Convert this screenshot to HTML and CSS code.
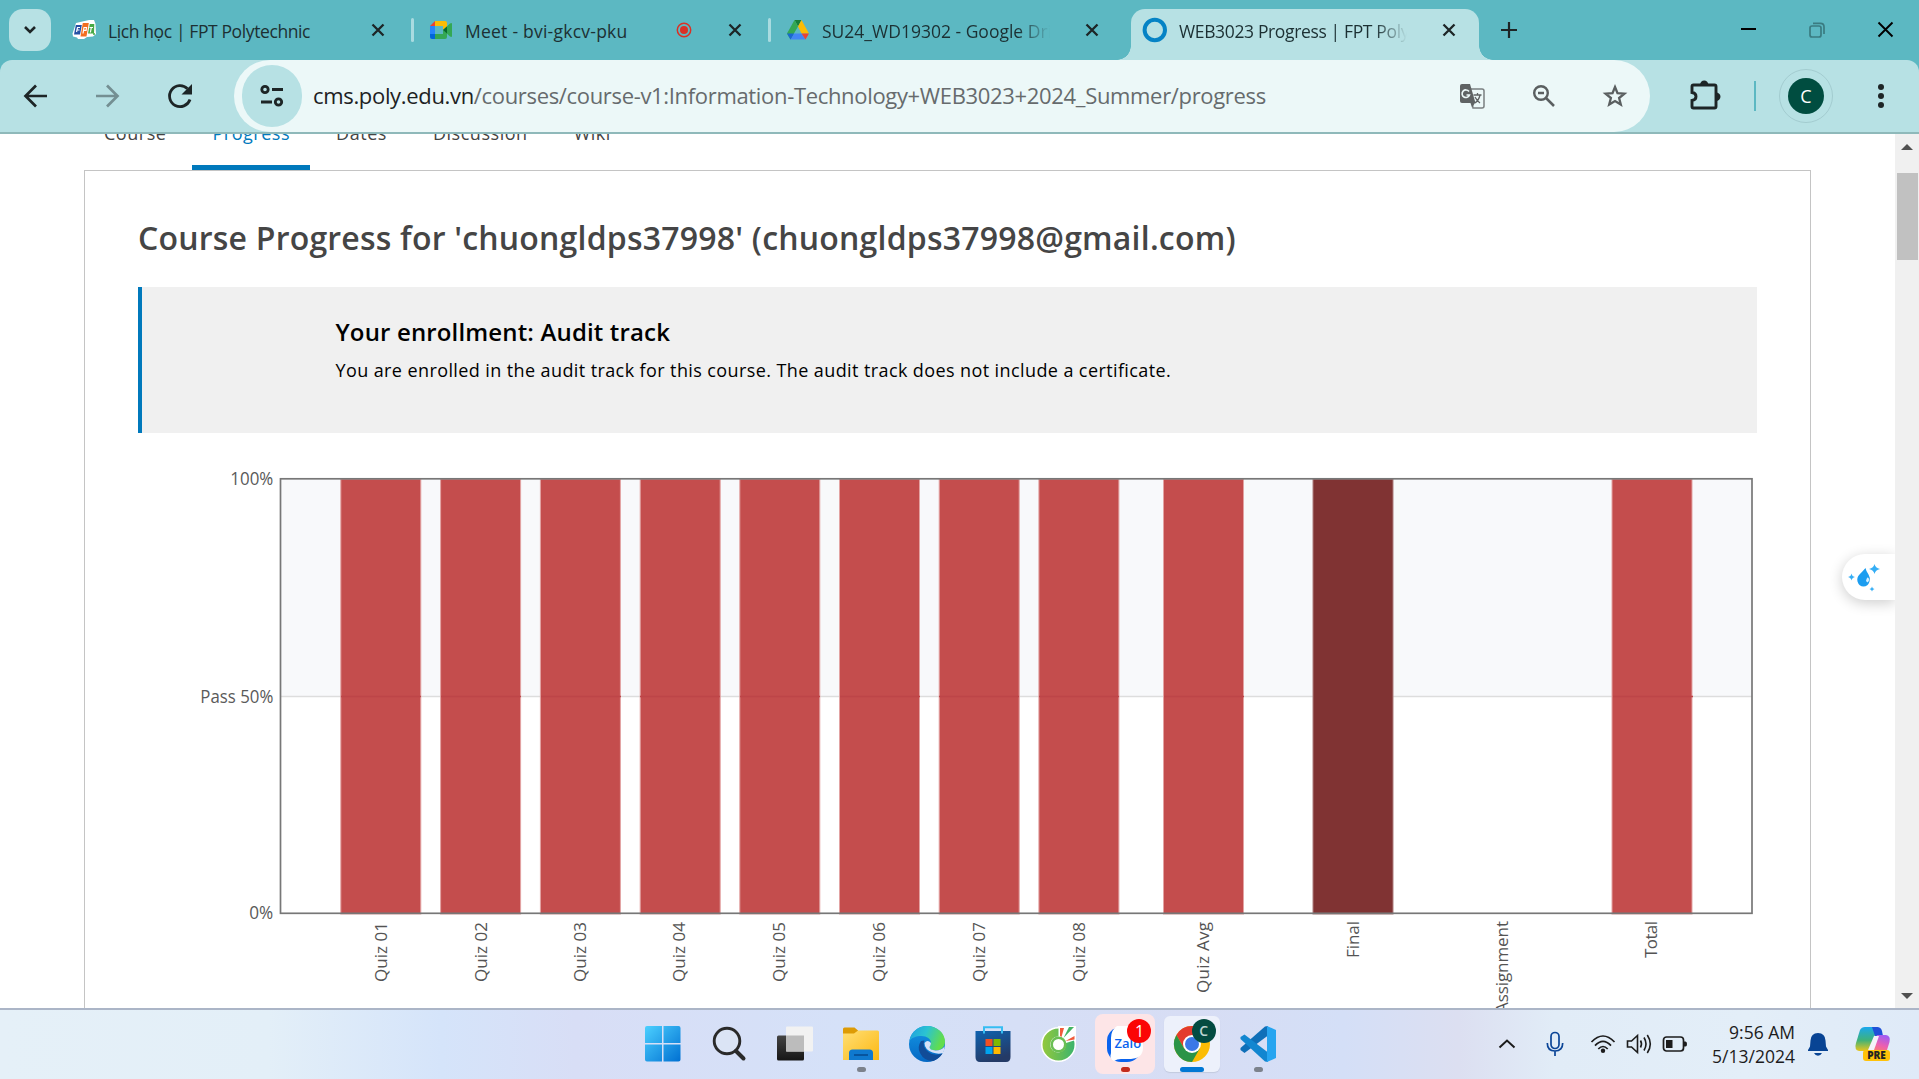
FILE: index.html
```html
<!DOCTYPE html>
<html lang="en">
<head>
<meta charset="utf-8">
<title>WEB3023 Progress | FPT Polytechnic</title>
<link rel="stylesheet" href="styles.css">
</head>
<body>
<svg width="0" height="0" class="defs">
  <defs>
    <linearGradient id="win" x1="0" y1="0" x2="1" y2="1"><stop offset="0" stop-color="#4cd0ff"/><stop offset="1" stop-color="#0070d2"/></linearGradient>
    <linearGradient id="dark" x1="0" y1="0" x2="0" y2="1"><stop offset="0" stop-color="#444"/><stop offset="1" stop-color="#161616"/></linearGradient>
    <linearGradient id="folder" x1="0" y1="0" x2="1" y2="1"><stop offset="0" stop-color="#ffdf75"/><stop offset="1" stop-color="#fcb813"/></linearGradient>
    <linearGradient id="edgeA" x1="0" y1="0" x2="1" y2="0.3"><stop offset="0" stop-color="#1e9de0"/><stop offset=".5" stop-color="#2bc3d2"/><stop offset="1" stop-color="#62dd4c"/></linearGradient>
    <linearGradient id="edgeB" x1="0" y1="0" x2="0" y2="1"><stop offset="0" stop-color="#1597e4"/><stop offset="1" stop-color="#0568c4"/></linearGradient>
    <linearGradient id="store" x1="0" y1="0" x2="0.4" y2="1"><stop offset="0" stop-color="#0f63b0"/><stop offset="1" stop-color="#243a66"/></linearGradient>
    <linearGradient id="coc" x1="0" y1="0" x2="1" y2="0"><stop offset="0" stop-color="#93c83d"/><stop offset="1" stop-color="#3cb46c"/></linearGradient>
    <linearGradient id="copA" x1="0" y1="0" x2="0" y2="1"><stop offset="0" stop-color="#1aa7ee"/><stop offset=".55" stop-color="#3fb27a"/><stop offset="1" stop-color="#e9c51c"/></linearGradient>
    <linearGradient id="copB" x1="0.6" y1="0" x2="0.2" y2="1"><stop offset="0" stop-color="#a45cf0"/><stop offset=".5" stop-color="#ee5fae"/><stop offset="1" stop-color="#fb8a52"/></linearGradient>
    <symbol id="x" viewBox="0 0 14 14"><path d="M1.500 1.500l11 11M12.500 1.500l-11 11" stroke="#1d2526" stroke-width="2.300" fill="none"/></symbol>
  </defs>
</svg>

<div class="browser-top">
<header class="tabstrip">
  <button class="tab-search"><svg width="14" height="10" viewBox="0 0 14 10"><path d="M2 2l5 5 5-5" fill="none" stroke="#1d2526" stroke-width="2.600"/></svg></button>
  <div class="tab tab-a">
    <svg class="fav" width="24" height="20" viewBox="0 0 24 20"><path d="M4 3L17 0h5l1.500 4 .5 10-3 2.500-6 .5-3 2H6l-1-1.500-4-1-.5-3z" fill="#fff"/><path d="M3.800 5h6L8 14.500H2z" fill="#2450a4"/><path d="M10.800 3h6L14.500 16.500h-6z" fill="#f26f21"/><path d="M17.800 4h4.500l-.3 9.500h-6z" fill="#46a945"/><path d="M4.500 12l1-4.500H8M5 10h2.500M11 13.500l1-6h2.500l-.4 2.800H12M17.500 7.500H21M19.300 7.500l-.9 5" stroke="#fff" stroke-width="1.200" fill="none"/><circle cx="22" cy="14" r="1" fill="#46a945"/></svg>
    <span class="tab-title t1">Lịch học | FPT Polytechnic</span>
    <svg class="close" width="14" height="14"><use href="#x"/></svg>
  </div>
  <i class="tab-sep"></i>
  <div class="tab tab-b">
    <svg class="fav" width="24" height="20" viewBox="0 0 24 20"><path d="M1 6L6 1v5z" fill="#ea4335"/><path d="M6 1h10q2 0 2 2v4l-4 3V6H6z" fill="#fbbc04"/><path d="M1 6h5v8H1z" fill="#2684fc"/><path d="M1 14h5v5H3q-2 0-2-2z" fill="#0066da"/><path d="M6 14h8v-4l4 3v4q0 2-2 2H6z" fill="#34a853"/><path d="M14 10l7-6.500q2-1 2 .5v12q0 1.500-2 .5z" fill="#34a853"/><path d="M14 10l4-3.500v7z" fill="#0a6a2c"/></svg>
    <span class="tab-title t2">Meet - bvi-gkcv-pku</span>
    <svg class="rec" width="16" height="16" viewBox="0 0 16 16"><circle cx="8" cy="8" r="6.700" fill="none" stroke="#d93025" stroke-width="1.500"/><circle cx="8" cy="8" r="4" fill="#d93025"/></svg>
    <svg class="close" width="14" height="14"><use href="#x"/></svg>
  </div>
  <i class="tab-sep"></i>
  <div class="tab tab-c">
    <svg class="fav" width="24" height="22" viewBox="0 0 24 22"><path d="M8.500 1h7L12 7.500z" fill="#188038"/><path d="M8.500 1L1 14.500 4.500 20.500 12 7.500z" fill="#34a853"/><path d="M15.500 1L23 14.500h-7.500L12 7.500z" fill="#fbbc04"/><path d="M4.500 20.500h15l-4-6H8z" fill="#4285f4"/><path d="M1 14.500h7l-3.500 6z" fill="#1967d2"/><path d="M15.500 14.500H23l-3.500 6z" fill="#ea4335"/></svg>
    <span class="tab-title fade t3">SU24_WD19302 - Google Drive</span>
    <svg class="close" width="14" height="14"><use href="#x"/></svg>
  </div>
  <div class="tab tab-active">
    <svg class="fav" width="26" height="26" viewBox="0 0 26 26"><circle cx="12.800" cy="13" r="10.200" fill="none" stroke="#0583c5" stroke-width="4"/></svg>
    <span class="tab-title fade t4">WEB3023 Progress | FPT Polytechnic</span>
    <svg class="close" width="14" height="14"><use href="#x"/></svg>
  </div>
  <svg class="plus" width="16" height="16" viewBox="0 0 16 16"><path d="M8 0v16M0 8h16" stroke="#1d2526" stroke-width="2.200"/></svg>
  <div class="window-buttons">
    <svg width="16" height="16" viewBox="0 0 16 16"><path d="M1 7h15" stroke="#000" stroke-width="2"/></svg>
    <svg width="16" height="16" viewBox="0 0 16 16"><rect x="1" y="4" width="11" height="11" rx="2" fill="none" stroke="#3a7b81" stroke-width="1.700"/><path d="M4 1.300h7.500q3.500 0 3.500 3.500V12" fill="none" stroke="#3a7b81" stroke-width="1.700"/></svg>
    <svg width="16" height="16" viewBox="0 0 16 16"><path d="M1.500 .5l14 14M15.500 .5l-14 14" stroke="#000" stroke-width="1.900"/></svg>
  </div>
</header>

<nav class="toolbar">
  <svg class="nav-icon" width="24" height="24" viewBox="0 0 24 24"><path d="M13 1.500L2.500 12 13 22.500M2.500 12H24" fill="none" stroke="#1d2526" stroke-width="2.700"/></svg>
  <svg class="nav-icon" width="24" height="24" viewBox="0 0 24 24"><path d="M11 1.500L21.500 12 11 22.500M21.500 12H0" fill="none" stroke="#748f92" stroke-width="2.700"/></svg>
  <svg class="nav-icon" width="24" height="24" viewBox="0 0 24 24"><path d="M22 15.500A10.500 10.500 0 1 1 19.500 4.700" fill="none" stroke="#1d2526" stroke-width="2.800"/><path d="M24 0v10.500H13.500z" fill="#1d2526"/></svg>
  <div class="omnibox">
    <span class="site-info"><svg width="24" height="22" viewBox="0 0 24 22"><g fill="none" stroke="#1d2526" stroke-width="2.800"><circle cx="5" cy="4.500" r="3.200"/><path d="M12 4.500h11M1 17h11"/><circle cx="18.500" cy="17" r="3.200"/></g></svg></span>
    <span class="url"><b>cms.poly.edu.vn</b>/courses/course-v1:Information-Technology+WEB3023+2024_Summer/progress</span>
    <svg width="26" height="26" viewBox="0 0 26 26"><path d="M11 6h12q2 0 2 2v15q0 2-2 2H14z" fill="#ecf8f8" stroke="#7a7f80" stroke-width="1.500"/><path d="M3 1h8l5.500 19H3q-2 0-2-2V3q0-2 2-2z" fill="#5f6364"/><path d="M11.500 20H16l-3 4.500z" fill="#5f6364"/><path d="M10 8.500A3.800 3.800 0 1 0 10.500 12H7.500" fill="none" stroke="#ecf8f8" stroke-width="1.600"/><path d="M14.500 12h8M18.500 10v2M21 12q-1 5-5 8M16 14q2 4 5 6" fill="none" stroke="#5f6364" stroke-width="1.300"/></svg>
    <svg width="24" height="24" viewBox="0 0 24 24"><circle cx="9" cy="9" r="6.800" fill="none" stroke="#5a5f60" stroke-width="2.400"/><path d="M6 9h6M14 14l8 8" stroke="#5a5f60" stroke-width="2.500"/></svg>
    <svg width="24" height="24" viewBox="0 0 24 24"><path d="M12 3l2.500 6.200 6.900.5-5.300 4.300 1.700 6.500L12 17l-5.800 3.500L7.900 14 2.600 9.700l6.900-.5z" fill="none" stroke="#5a5f60" stroke-width="2.300"/></svg>
  </div>
  <svg class="puzzle" width="32" height="32" viewBox="0 0 32 32"><path d="M4 6.500q0-1.500 1.500-1.500h21q1.500 0 1.500 1.500v20q0 1.500-1.500 1.500h-21q-1.500 0-1.500-1.500v-6q4-.5 4-4t-4-4z" fill="none" stroke="#1d2526" stroke-width="2.900"/><path d="M12 5a4.200 4.500 0 0 1 8.400 0zM28 12.500a4.500 4.200 0 0 1 0 8.400z" fill="#1d2526"/></svg>
  <i class="bar-sep"></i>
  <span class="profile"><span>C</span></span>
  <svg class="dots" width="6" height="26" viewBox="0 0 6 26"><g fill="#1d2526"><circle cx="3" cy="4" r="3"/><circle cx="3" cy="13" r="3"/><circle cx="3" cy="22" r="3"/></g></svg>
</nav>
</div>

<main class="viewport">
  <div class="content">
    <nav class="course-tabs">
      <a>Course</a><a class="current">Progress</a><a>Dates</a><a>Discussion</a><a>Wiki</a>
    </nav>
    <section class="card">
      <h1>Course Progress for 'chuongldps37998' (chuongldps37998@gmail.com)</h1>
      <div class="notice">
        <h2>Your enrollment: Audit track</h2>
        <p>You are enrolled in the audit track for this course. The audit track does not include a certificate.</p>
      </div>
      <svg class="chart" width="1620" height="600" viewBox="138 433 1620 600">
        <rect x="281" y="479" width="1471" height="217" fill="#f8f9fb"/>
        <path d="M281 696.500h1471" stroke="#ddd" stroke-width="1.500"/>
        <g class="bars">
          <rect x="340.800" y="479" width="80" height="435"/><rect x="440.600" y="479" width="80" height="435"/><rect x="540.400" y="479" width="80" height="435"/><rect x="640.200" y="479" width="80" height="435"/><rect x="739.800" y="479" width="80" height="435"/><rect x="839.500" y="479" width="80" height="435"/><rect x="939.200" y="479" width="80" height="435"/><rect x="1038.900" y="479" width="80" height="435"/><rect x="1163.500" y="479" width="80" height="435"/>
          <rect class="final" x="1313" y="479" width="80" height="435"/>
          <rect x="1612" y="479" width="80" height="435"/>
        </g>
        <path d="M341 696.500h80m20 0h80m20 0h80m19 0h80m20 0h80m20 0h80m19 0h80m20 0h80m45 0h80m369 0h80" stroke="#bd4548" stroke-width="1.500"/>
        <rect x="280.500" y="478.800" width="1471.500" height="434.500" fill="none" stroke="#777" stroke-width="1.700"/>
        <g class="ylabels" text-anchor="end">
          <text x="273.300" y="485" textLength="43" lengthAdjust="spacingAndGlyphs">100%</text><text x="273.300" y="703" textLength="73" lengthAdjust="spacingAndGlyphs">Pass 50%</text><text x="273.300" y="919" textLength="24" lengthAdjust="spacingAndGlyphs">0%</text>
        </g>
        <g class="xlabels" text-anchor="end">
          <text transform="translate(387 922) rotate(-90)" textLength="60">Quiz 01</text>
          <text transform="translate(487 922) rotate(-90)" textLength="60">Quiz 02</text>
          <text transform="translate(585.500 922) rotate(-90)" textLength="60">Quiz 03</text>
          <text transform="translate(685 922) rotate(-90)" textLength="60">Quiz 04</text>
          <text transform="translate(785 922) rotate(-90)" textLength="60">Quiz 05</text>
          <text transform="translate(885 922) rotate(-90)" textLength="60">Quiz 06</text>
          <text transform="translate(985 922) rotate(-90)" textLength="60">Quiz 07</text>
          <text transform="translate(1085 922) rotate(-90)" textLength="60">Quiz 08</text>
          <text transform="translate(1209 922) rotate(-90)" textLength="71">Quiz Avg</text>
          <text transform="translate(1359 921) rotate(-90)" textLength="37">Final</text>
          <text transform="translate(1507.500 921) rotate(-90)" textLength="92">Assignment</text>
          <text transform="translate(1657 921) rotate(-90)" textLength="37">Total</text>
        </g>
      </svg>
    </section>
  </div>
  <aside class="scrollbar">
    <svg width="12" height="8" viewBox="0 0 12 8"><path d="M0 7L6 1l6 6z" fill="#505050"/></svg>
    <i class="thumb"></i>
    <svg class="down" width="12" height="8" viewBox="0 0 12 8"><path d="M0 1l6 6 6-6z" fill="#505050"/></svg>
  </aside>
  <div class="assistant"><svg width="32" height="30" viewBox="0 0 32 30"><path d="M17.500 4q.5 3 3 6.500 2 3 1 7-1.500 5-6 5t-6-5q-1-4 2-7 3.500-3.500 6-6.500z" fill="#1c9df0"/><path d="M18 17q.500-3 1.500-3.500t1.500 1.500-1.500 3.500z" fill="#d9f0ff"/><path d="M26.500 0q.8 4 5.500 5-4.700 1-5.500 5-.8-4-5.500-5 4.700-1 5.500-5zM3.500 9.500q.5 3 3.500 3.500-3 .5-3.500 3.500Q3 13.500 0 13q3-.5 3.500-3.500zM24 22.500q.3 2 2.500 2.500-2.200.5-2.500 2.500-.3-2-2.500-2.500 2.200-.5 2.500-2.500z" fill="#35aef5"/></svg></div>
</main>

<footer class="taskbar">
  <div class="apps">
    <span class="app"><svg width="36" height="36" viewBox="0 0 36 36"><path d="M0 2q0-2 2-2h15v17H0zM18.500 0H33.500q2 0 2 2v15h-17zM0 18.500h17v17H2q-2 0-2-2zM18.500 18.500h17v15q0 2-2 2h-15z" fill="url(#win)"/></svg></span>
    <span class="app"><svg width="34" height="36" viewBox="0 0 34 36"><circle cx="15" cy="15" r="12.800" fill="#dde5f3" fill-opacity=".7" stroke="#2a2a2a" stroke-width="2.900"/><path d="M24 25l7.500 7.500" stroke="#2a2a2a" stroke-width="4" stroke-linecap="round"/></svg></span>
    <span class="app"><svg width="36" height="36" viewBox="0 0 36 36"><rect x="0" y="9.500" width="27" height="25" rx="1.500" fill="url(#dark)"/><rect x="9" y="0.500" width="27" height="25" rx="1" fill="#f2f2f2"/><rect x="9" y="9.500" width="18" height="16" fill="#bcbcbc"/></svg></span>
    <span class="app"><svg width="36" height="34" viewBox="0 0 36 34"><path d="M0 7V2q0-1.500 1.500-1.500h10L15 3.500V8z" fill="#dd9b05"/><path d="M0 6.500h11L15 3.500h19.500q1.500 0 1.500 1.500v28H0z" fill="url(#folder)"/><path d="M6 33v-7q0-3.500 3.500-3.500h17q3.500 0 3.500 3.500v7z" fill="#0f79cf"/><path d="M11 28h14" stroke="#064f95" stroke-width="1.700"/></svg><i class="dot"></i></span>
    <span class="app"><svg width="36" height="36" viewBox="0 0 36 36"><circle cx="18" cy="18" r="18" fill="url(#edgeB)"/><path d="M0.500 15C2 6 9 0 18 0c10 0 18 7 18 15.500 0 6-4.500 9-9.500 9-4 0-6-1.500-6-3.200 0-1 1.500-1.800 1.500-4.300 0-4-4-7-9.500-7C7 10 2 12 0.500 15z" fill="url(#edgeA)"/><path d="M12 15q-4 6-1 12 4 8 13 8 6-2 9.500-7.500-4 1.500-8 1-7-1-10.500-8-1-3.500.5-6z" fill="#114c98"/><path d="M34 27q-5 1.500-10.500-.5-8-3-8-9.500 3-4 6.500 0 0 2-1.500 4 0 3 6 3.500 6 0 9-4 0 4-1.500 6.500z" fill="#d6e1f7"/></svg></span>
    <span class="app"><svg width="36" height="36" viewBox="0 0 36 36"><path d="M9 7V1.200h18V7" fill="none" stroke="#36bdf2" stroke-width="2"/><path d="M0.500 5h35v26q0 5-4.500 5H5q-4.500 0-4.500-5z" fill="url(#store)"/><path d="M9 5v2.500M27 5v2.500" stroke="#36bdf2" stroke-width="2"/><path d="M10.500 13h7v7h-7z" fill="#f25022"/><path d="M18.500 13h7v7h-7z" fill="#7fba00"/><path d="M10.500 21h7v7h-7z" fill="#00a4ef"/><path d="M18.500 21h7v7h-7z" fill="#ffb900"/></svg></span>
    <span class="app"><svg width="36" height="36" viewBox="0 0 36 36"><circle cx="17.500" cy="18.500" r="17.500" fill="#fff"/><path d="M17 0h18v20H20z" fill="#fff"/><path d="M17.500 2.500a16 16 0 1 0 16 16q0-2-.5-4l-8 2.500a8 8 0 1 1-7.500-6.500z" fill="url(#coc)"/><circle cx="17.500" cy="18.500" r="8" fill="#6bbf55"/><circle cx="17.500" cy="18.500" r="5.500" fill="#fff"/><path d="M19 10V2l4 0-2.500 9z" fill="#f15a3b"/><path d="M22.500 12L28 1h5z" fill="#43b563"/><path d="M24.500 15L33.500 10v3.500z" fill="#f15a3b"/></svg></span>
    <span class="app alert"><svg width="36" height="36" viewBox="0 0 36 36"><rect x="0" y="1" width="34" height="35" rx="14" fill="#0a63ee"/><path d="M10 0h14q12 1 12 12v10q0 10-12 11H14q-4 0-7 2Q2 33 4 27V12Q4 4 10 0z" fill="#fff"/></svg><em class="zalo">Zalo</em><b class="badge">1</b><i class="dot red"></i></span>
    <span class="app active"><svg width="36" height="36" viewBox="0 0 36 36"><circle cx="18" cy="18" r="18" fill="#fbbc04"/><path d="M2.400 9A18 18 0 0 1 33.600 9H18l-7.800 13.500z" fill="#e33b2e"/><path d="M2.400 9A18 18 0 0 0 18 36l7.800-13.500H10.200z" fill="#2a9447"/><circle cx="18" cy="18" r="9" fill="#fff"/><circle cx="18" cy="18" r="7" fill="#3b78e7"/></svg><b class="badge green">C</b><i class="dot wide"></i></span>
    <span class="app"><svg width="36" height="36" viewBox="0 0 36 36"><path d="M25 0.500L28 0v9.500L4.500 27 0.500 24V22z" fill="#0f6fb8"/><path d="M0.500 11l4-2.500L28 26.500V36l-3-.5L.5 13z" fill="#1286d0"/><path d="M27 0l9 4v28l-9 4z" fill="#27a5f0"/></svg><i class="dot"></i></span>
  </div>
  <div class="tray">
    <svg class="chev" width="18" height="12" viewBox="0 0 18 12"><path d="M1.500 9.500L9 2.500l7.500 7" fill="none" stroke="#1c1c1c" stroke-width="2"/></svg>
    <svg class="mic" width="18" height="26" viewBox="0 0 18 26"><g fill="none" stroke="#0b4597" stroke-width="1.700"><rect x="5" y="1.500" width="8" height="16" rx="4"/><path d="M1.300 12q0 8 7.700 8t7.700-8M9 20v5"/></g></svg>
    <svg class="wifi" width="26" height="20" viewBox="0 0 26 20"><g fill="none" stroke="#1c1c1c" stroke-width="1.700"><path d="M1.500 8q11.500-12 23 0M5 11.700q8-8.500 16 0M8.300 15q4.700-5 9.400 0"/></g><circle cx="13" cy="16.800" r="2.200" fill="#1c1c1c"/></svg>
    <svg class="vol" width="26" height="22" viewBox="0 0 26 22"><g fill="none" stroke="#1c1c1c" stroke-width="1.600"><path d="M1.500 8v6h4l6 5.500V2.500L5.500 8z"/><path d="M14.500 7.500q2 3.500 0 7M18 4.500q4 6.500 0 13M21.300 2q6 9 0 18"/></g></svg>
    <svg class="bat" width="26" height="18" viewBox="0 0 26 18"><rect x="1.500" y="2" width="20" height="14" rx="3" fill="none" stroke="#1c1c1c" stroke-width="1.700"/><path d="M4 5h6.500v8H4zM22 6.500h1.500q1.500 0 1.500 2.500t-1.500 2.500H22z" fill="#1c1c1c"/></svg>
    <div class="clock"><span>9:56 AM</span><span>5/13/2024</span></div>
    <svg class="bell" width="20" height="24" viewBox="0 0 20 24"><path d="M10 1q7 0 7.500 7.500l.5 6 2 3.500v1H0v-1l2-3.500.5-6Q3 1 10 1zM6 21h8q-1.500 2.800-4 2.800T6 21z" fill="#084494"/></svg>
    <div class="copilot"><svg width="36" height="32" viewBox="0 0 36 32"><path d="M10 1h13l-9 24H4q-5-1-3-8L5 4q1.500-3 5-3z" fill="url(#copA)"/><path d="M17 1h5q4 0 5 4l1 5h-8z" fill="#1f50d8"/><path d="M22 9h9q5 1 3.500 7L32 24q-1 3-6 3H12q3-1 5-8z" fill="url(#copB)"/><path d="M19 10l5 0-5 14h-6z" fill="#f4f1fa"/></svg><b>PRE</b></div>
  </div>
</footer>
</body>
</html>
```
FILE: styles.css
```css
* { box-sizing: border-box; }
body { margin: 0; width: 1919px; height: 1079px; overflow: hidden; display: flex; flex-direction: column; background: #fff; font-family: "Open Sans", "Noto Sans", sans-serif; }
svg { display: block; flex: none; overflow: visible; }
.defs { position: absolute; }

/* Browser tab strip */
.browser-top { flex: none; background: #5cb8c2; }
.tabstrip { height: 60px; display: flex; align-items: center; padding-left: 9px; }
.tab-search { width: 42px; height: 42px; border: 0; border-radius: 14px; background: #b7e1e4; padding: 0; display: grid; place-items: center; flex: none; }
.tab { display: flex; align-items: center; height: 51px; flex: none; }
.tab-a { width: 360px; padding-left: 21px; }
.tab-b { width: 354px; padding-left: 15px; }
.tab-c { width: 360px; padding-left: 15px; }
.tab-title { margin-left: 12px; padding-top: 2px; flex: 1; font-size: 17.5px; line-height: 26px; color: #1c3033; white-space: nowrap; overflow: hidden; }
.t1 { letter-spacing: -0.39px; }
.t2 { letter-spacing: 0.24px; }
.t4 { letter-spacing: -0.36px; }
.tab-sep { width: 3px; height: 24px; background: #a9dbe0; flex: none; border-radius: 2px; }
.close { margin-right: 26px; }
.tab-c .close { margin-right: 32px; }
.rec { margin-right: 36px; }
.fade { margin-right: 35px; -webkit-mask-image: linear-gradient(90deg, #000 86%, transparent); mask-image: linear-gradient(90deg, #000 86%, transparent); }
.tab-active { position: relative; align-self: flex-end; width: 348px; background: #b7e1e4; border-radius: 14px 14px 0 0; padding: 0 23px 9px 11px; }
.tab-active .tab-title { margin-left: 11px; }
.tab-active .close { margin-right: 0; }
.tab-active::before, .tab-active::after { content: ""; position: absolute; bottom: 0; width: 14px; height: 14px; }
.tab-active::before { left: -14px; background: radial-gradient(circle at 0 0, transparent 13.5px, #b7e1e4 14px); }
.tab-active::after { right: -14px; background: radial-gradient(circle at 100% 0, transparent 13.5px, #b7e1e4 14px); }
.plus { margin-left: 22px; }
.window-buttons { margin-left: auto; display: flex; gap: 52.500px; padding-right: 26px; }

/* Toolbar */
.toolbar { height: 74px; background: #b7e1e4; border-bottom: 2px solid #8fb9ba; display: flex; align-items: center; padding-left: 23px; border-radius: 12px 12px 0 0; }
.nav-icon { margin-right: 49px; }
.nav-icon:nth-child(2) { margin-right: 48px; }
.nav-icon:nth-child(3) { margin-right: 42px; }
.omnibox { width: 1416px; height: 72px; border-radius: 36px; background: #ecf8f8; display: flex; align-items: center; padding-left: 8px; padding-right: 23px; gap: 47px; }
.site-info { width: 60px; height: 62px; border-radius: 31px; background: #b7e1e4; display: grid; place-items: center; margin-right: -36px; padding-right: 1px; }
.url { flex: 1; font-size: 22px; line-height: 32px; letter-spacing: -0.33px; color: #666b6d; white-space: nowrap; padding-bottom: 2px; }
.url b { font-weight: 400; color: #1d2223; }
.puzzle { margin-left: 38px; }
.bar-sep { width: 2.500px; height: 30px; background: #5cb8c2; margin-left: 33.500px; }
.profile { width: 54px; height: 54px; border: 1.500px solid #a3ccd0; border-radius: 50%; display: grid; place-items: center; margin-left: 23px; }
.profile span { width: 36px; height: 36px; border-radius: 50%; background: #004d40; color: #fff; font-size: 18px; display: grid; place-items: center; }
.dots { margin-left: 45px; }

/* Page */
.viewport { position: relative; height: 874px; flex: none; display: flex; overflow: hidden; }
.content { flex: 1; padding-left: 84px; }
.course-tabs { height: 36px; display: flex; align-items: flex-end; }
.course-tabs a { height: 50px; padding: 0 20px; margin-right: 6px; font-size: 18px; line-height: 26px; letter-spacing: 0.53px; color: #444; border-bottom: 5px solid transparent; }
.course-tabs .current { color: #0079bc; border-color: #0079bc; }
.card { width: 1727px; height: 900px; border: 1px solid #c4c4c4; padding: 0 53px; }
h1 { margin: 45px 0 0; font-size: 32px; line-height: 44px; font-weight: 600; letter-spacing: 0.21px; color: #454545; white-space: nowrap; }
.notice { margin-top: 27px; width: 1619px; height: 146px; background: #f0f0f0; border-left: 4px solid #0079bc; padding: 28px 0 0 193.500px; color: #000; }
.notice h2 { margin: 0; font-size: 24px; line-height: 34px; font-weight: 600; letter-spacing: 0.15px; }
.notice p { margin: 7px 0 0; font-size: 18px; line-height: 28px; letter-spacing: 0.4px; }
.bars { fill: #c44d4d; stroke: #e3a3a3; stroke-width: 1; }
.bars .final { fill: #803333; stroke: #ad7f7f; }
.ylabels { font-size: 18px; fill: #5a5a5a; }
.xlabels { font-size: 17px; fill: #545454; }
.scrollbar { width: 24px; background: #f0f0f0; display: flex; flex-direction: column; align-items: center; padding: 9px 0 8px; }
.thumb { width: 21px; height: 87px; background: #c1c1c1; margin-top: 22px; }
.down { margin-top: auto; }
.assistant { position: absolute; right: 24px; top: 420px; width: 53px; height: 46px; border-radius: 23px 0 0 23px; background: #fff; box-shadow: 0 3px 14px rgba(0,0,0,.2); clip-path: inset(-20px 0 -20px -20px); padding: 10px 0 0 6px; }

/* Windows taskbar */
.taskbar { height: 71px; flex: none; border-top: 2px solid #abb5c7; display: flex; background: linear-gradient(90deg, #e5f0f8 0, #e3eff8 14%, #d5e4fa 23%, #d8def6 30%, #d5e1f8 44%, #d7ddf4 62%, #d4dff7 70%, #dcdff1 76%, #e1ecf7 81%, #e3eef8 91%, #dfeaf8 100%); }
.apps { display: flex; margin-right: auto; padding-left: 634.500px; gap: 10.150px; align-items: center; height: 68px; }
.app { position: relative; width: 56px; height: 56px; border-radius: 6px; display: grid; place-items: center; }
.dot { position: absolute; left: 24px; bottom: 0; width: 9px; height: 5px; border-radius: 3px; background: #7c828c; }
.dot.red { background: #c42b1c; }
.dot.wide { width: 24px; left: 16px; background: #0078d4; }
.alert { background: #fde5e7; box-shadow: 0 0 0 2px #fde5e7; }
.active { background: #edf1fb; box-shadow: 0 1px 1px #c2cade; }
.zalo { position: absolute; left: 17px; top: 17px; font: 600 13px/20px "Open Sans", sans-serif; color: #0a63ee; }
.badge { position: absolute; left: 30px; top: 3px; width: 24px; height: 24px; border-radius: 50%; background: #fb0505; color: #fff; font-size: 16px; font-weight: 400; line-height: 24px; text-align: center; }
.badge.green { background: #044c41; left: 28px; font-size: 14px; font-weight: 600; color: #bdd6d2; }
.tray { display: flex; align-items: center; height: 68px; }
.chev { margin-right: 30px; }
.mic { margin-right: 26px; }
.wifi { margin-right: 10px; }
.vol { margin-right: 10px; }
.bat { margin-right: 20px; }
.clock { width: 87px; display: flex; flex-direction: column; align-items: flex-end; font-size: 17.500px; line-height: 24px; color: #1c1c1c; margin-right: 13px; white-space: nowrap; }
.bell { margin-right: 27px; }
.copilot { position: relative; width: 36px; height: 36px; margin-right: 28px; }
.copilot b { position: absolute; left: 8px; top: 24px; width: 27px; height: 11px; border-radius: 3px; background: #ffc20a; color: #222; font-size: 10px; line-height: 11px; font-weight: 800; text-align: center; }
```
